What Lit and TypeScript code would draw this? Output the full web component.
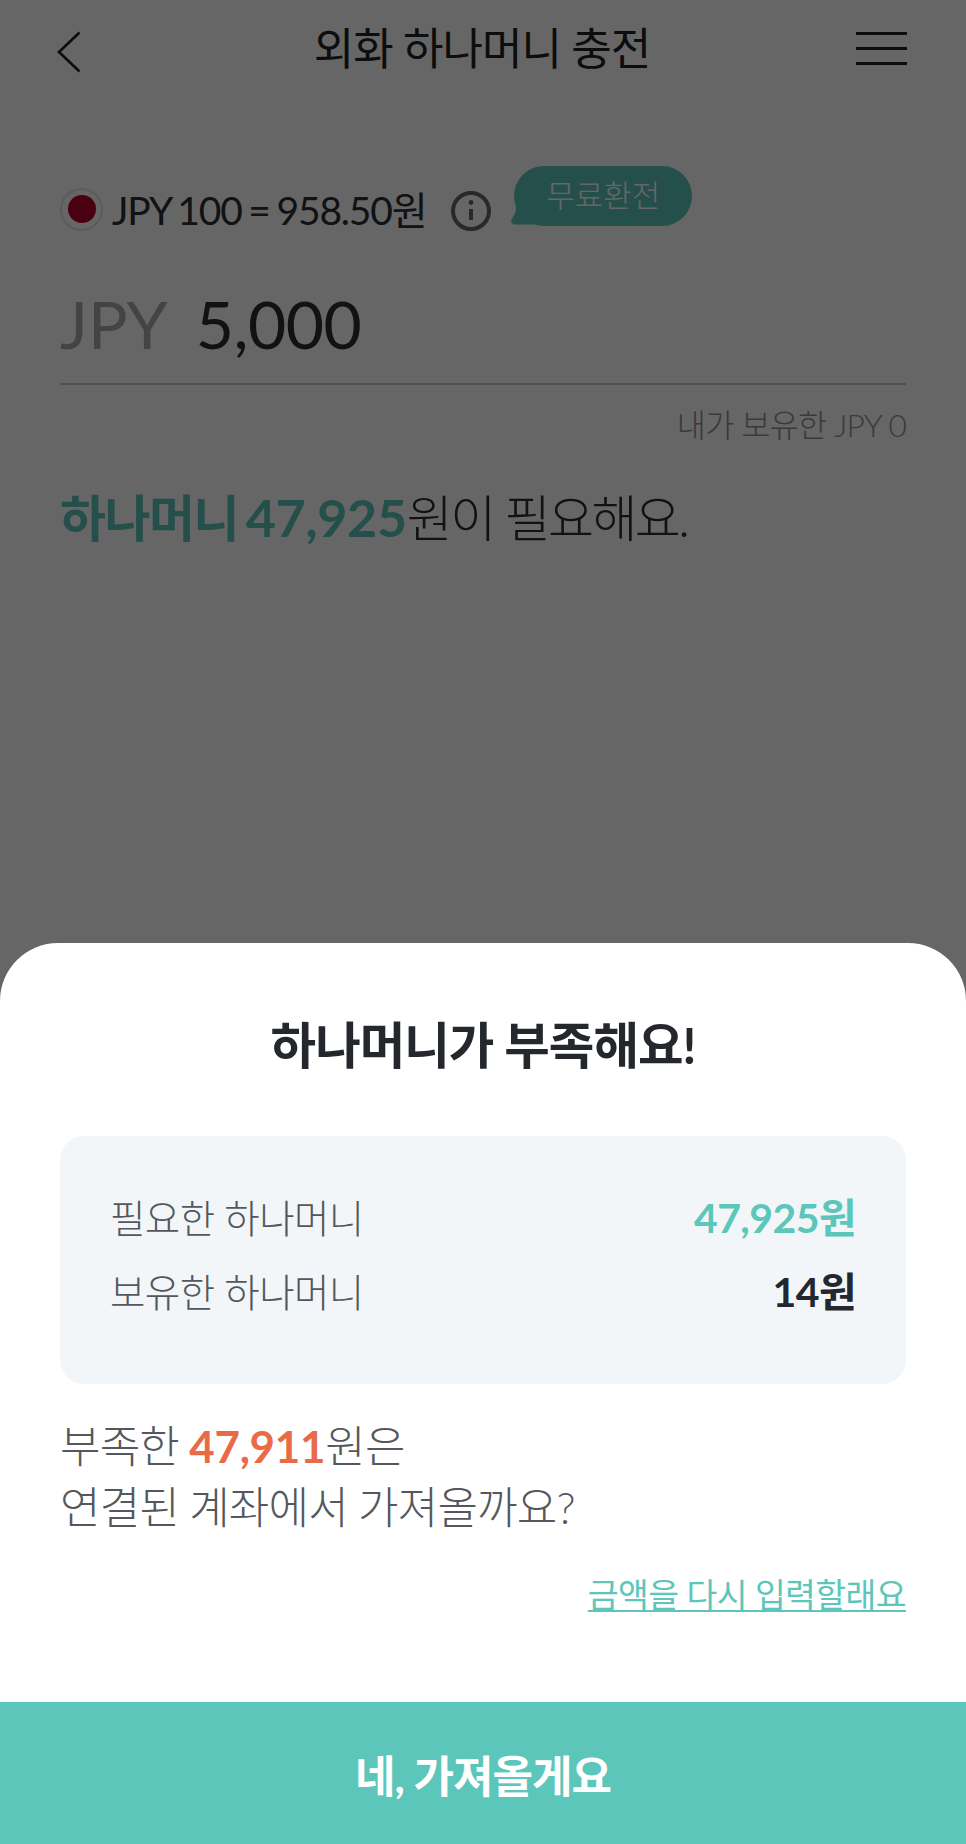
import { LitElement, html, css } from "lit";
import { customElement } from "lit/decorators.js";

@customElement("app-root")
export class AppRoot extends LitElement {
  static styles = css`
    :host { display: block; width: 966px; height: 1844px; font-family: "Lato", "Noto Sans CJK KR", sans-serif; font-weight: 300; color: #2a2d31; overflow: hidden; }
    * { box-sizing: border-box; }
    .page { position: relative; width: 966px; height: 1844px; background: #fff; overflow: hidden; }
    .header { height: 96px; display: grid; grid-template-columns: 1fr auto 1fr; align-items: center; padding: 0 59px 0 57px; }
    .back { margin-top: 8px; }
    .menu { justify-self: end; }
    .title { font-size: 44px; letter-spacing: -1px; font-weight: 400; color: #222; padding-bottom: 4px; }
    .rate { margin: 83px 60px 0; display: flex; align-items: center; height: 60px; }
    .flag { width: 43px; height: 43px; border-radius: 50%; border: 2px solid #e4e4e4; display: flex; align-items: center; justify-content: center; margin-right: 9px; }
    .flag i { width: 28px; height: 28px; border-radius: 50%; background: #bc002d; display: block; }
    .rate-text { font-size: 39px; font-weight: 400; letter-spacing: -1.2px; word-spacing: -2px; white-space: nowrap; padding-bottom: 2px; }
    .info { margin: 4px 0 0 24px; display: block; flex: none; }
    .bubble { position: relative; margin: -26px 0 0 22px; width: 178px; height: 60px; flex: none; border-radius: 30px; background: #5cc6ba; color: #fff; font-size: 31px; display: flex; align-items: center; justify-content: center; padding-bottom: 6px; }
    .bubble svg { position: absolute; left: -3px; bottom: 0; }
    .amount { margin: 35px 60px 0; height: 111px; border-bottom: 2px solid #c8c8c8; display: flex; align-items: center; font-size: 66px; font-weight: 400; letter-spacing: -.5px; padding-bottom: 10px; }
    .cur { color: #a6aab0; margin-right: 28px; letter-spacing: 0; }
    .held { margin: 20px 60px 0; text-align: right; font-size: 31.7px; line-height: 40px; color: #8e9196; letter-spacing: -.8px; }
    .need { margin: 42px 60px 0; font-size: 50px; line-height: 60px; letter-spacing: -2.6px; }
    .need b { color: #5cc6ba; font-weight: 700; letter-spacing: -1.5px; word-spacing: -3px; }
    .need .num { font-size: 52px; letter-spacing: -.3px; }
    .overlay { position: absolute; inset: 0; background: rgba(0,0,0,.6); }
    .sheet { position: absolute; left: 0; right: 0; top: 943px; bottom: 0; background: #fff; border-radius: 58px 58px 0 0; display: flex; flex-direction: column; }
    .sheet h2 { margin: 70px 0 0; text-align: center; font-size: 49.5px; font-weight: 700; letter-spacing: -1px; line-height: 64px; color: #24282c; }
    .panel { margin: 59px 60px 0; height: 248px; border-radius: 24px; background: #f2f6f9; padding: 0 50px 10px; display: flex; flex-direction: column; justify-content: center; gap: 26px; }
    .row { display: flex; justify-content: space-between; align-items: center; font-size: 38.5px; line-height: 48px; color: #54585c; letter-spacing: -.6px; }
    .row b { font-size: 41px; font-weight: 700; color: #24282c; letter-spacing: -.6px; }
    .row b.mint { color: #5cc6ba; }
    .q { margin: 32px 60px 0; font-size: 44px; line-height: 61px; color: #54585c; letter-spacing: -.8px; word-spacing: -1px; }
    .q b { color: #ea6a48; font-weight: 700; letter-spacing: -.3px; }
    .retry { margin: 34px 60px 0; text-align: right; font-size: 33.5px; font-weight: 400; line-height: 44px; color: #5cc6ba; text-decoration: underline; text-decoration-thickness: 2px; text-underline-offset: 3px; letter-spacing: -.6px; }
    .cta { margin-top: auto; height: 142px; background: #5cc6ba; color: #fff; font-size: 44px; font-weight: 700; letter-spacing: -1px; display: flex; align-items: center; justify-content: center; padding-top: 2px; }
  `;

  render() {
    return html`<div class="page">
      <div class="header">
        <svg class="back" width="24" height="42" viewBox="0 0 24 42" fill="none" stroke="#222" stroke-width="2.6"><path d="M22.5 1.5 2 21l20.5 19.500"/></svg>
        <div class="title">외화 하나머니 충전</div>
        <svg class="menu" width="51" height="33" viewBox="0 0 51 33" stroke="#222" stroke-width="3"><path d="M0 1.500h51M0 16.500h51M0 31.500h51"/></svg>
      </div>
      <div class="rate">
        <span class="flag"><i></i></span>
        <span class="rate-text">JPY 100 = 958.50원</span>
        <svg class="info" width="42" height="42" viewBox="0 0 42 42" fill="none" stroke="#5f6a72" stroke-width="4"><circle cx="21" cy="21" r="18"/><path d="M21 19v11" stroke-width="4"/><circle cx="21" cy="12.500" r="2.400" fill="#5f6a72" stroke="none"/></svg>
        <div class="bubble"><svg width="24" height="24" viewBox="0 0 24 24"><path d="M5 0C5 6 5.500 11 2 15c-3 3-2 7.500 2 7.500h20V0z" fill="#5cc6ba"/></svg><span>무료환전</span></div>
      </div>
      <div class="amount"><span class="cur">JPY</span><span>5,000</span></div>
      <div class="held">내가 보유한 JPY 0</div>
      <div class="need"><b>하나머니 <span class="num">47,925</span></b>원이 필요해요.</div>
      <div class="overlay"></div>
      <div class="sheet">
        <h2>하나머니가 부족해요!</h2>
        <div class="panel">
          <div class="row"><span>필요한 하나머니</span><b class="mint">47,925원</b></div>
          <div class="row"><span>보유한 하나머니</span><b>14원</b></div>
        </div>
        <div class="q">부족한 <b>47,911</b>원은<br>연결된 계좌에서 가져올까요?</div>
        <div class="retry">금액을 다시 입력할래요</div>
        <div class="cta">네, 가져올게요</div>
      </div>
    </div>`;
  }
}
